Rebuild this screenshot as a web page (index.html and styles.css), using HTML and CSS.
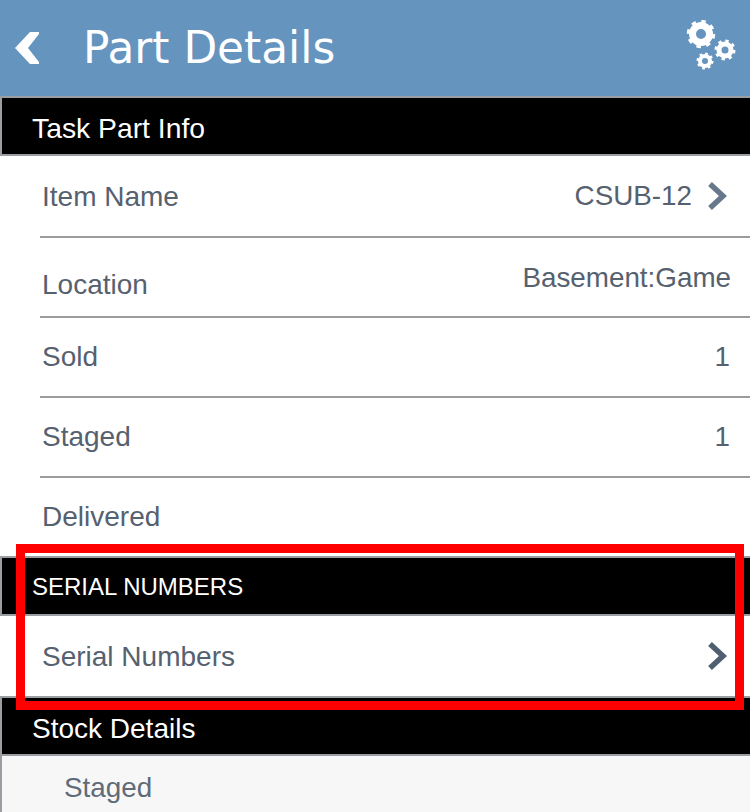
FILE: index.html
```html
<!DOCTYPE html>
<html lang="en">
<head>
    <meta charset="UTF-8">
    <meta name="viewport" content="width=device-width, initial-scale=1.0">
    <title>Part Details</title>
    <link rel="stylesheet" href="styles.css">
</head>
<body>
    <header class="topbar">
        <svg class="back-icon" width="25" height="32" viewBox="0 0 25 32">
            <path d="M24 2 L13 16 L24 30 L24 32 L15 32 L0 16 L15 0 L24 0 Z" fill="#fff"/>
        </svg>
        <h1>Part Details</h1>
        <svg class="gears-icon" width="52" height="54" viewBox="0 0 52 54">
            <g fill="none" stroke="#fff">
                <circle cx="17" cy="14" r="8.5" stroke-width="7"/>
                <circle cx="17" cy="14" r="12.5" stroke-width="3.5" stroke-dasharray="4.4 5.4"/>
                <circle cx="41" cy="30" r="6" stroke-width="5"/>
                <circle cx="41" cy="30" r="9" stroke-width="3" stroke-dasharray="3.3 3.77"/>
                <circle cx="21" cy="41" r="5" stroke-width="4"/>
                <circle cx="21" cy="41" r="7.2" stroke-width="2.6" stroke-dasharray="2.6 3.05"/>
            </g>
        </svg>
    </header>

    <main>
        <div class="section-title section-task">Task Part Info</div>
        <div class="row row-tall">
            <span>Item Name</span>
            <span class="row-value">CSUB-12
                <svg class="chevron" width="20" height="30" viewBox="0 0 20 30"><path d="M3 3 L16 15 L3 27" fill="none" stroke="#66788a" stroke-width="5.5"/></svg>
            </span>
        </div>
        <div class="row row-location">
            <span>Location</span>
            <span class="row-value">Basement:Game</span>
        </div>
        <div class="row">
            <span>Sold</span>
            <span class="row-value">1</span>
        </div>
        <div class="row">
            <span>Staged</span>
            <span class="row-value">1</span>
        </div>
        <div class="row row-last">
            <span>Delivered</span>
        </div>

        <div class="section-title section-caps">SERIAL NUMBERS</div>
        <div class="row row-last row-tall">
            <span>Serial Numbers</span>
            <span class="row-value">
                <svg class="chevron" width="20" height="30" viewBox="0 0 20 30"><path d="M3 3 L16 15 L3 27" fill="none" stroke="#4f5f70" stroke-width="5.5"/></svg>
            </span>
        </div>

        <div class="section-title section-stock">Stock Details</div>
        <div class="stock-row">Staged</div>
    </main>

    <div class="highlight"></div>
</body>
</html>
```

FILE: styles.css
```css
body {
    font-family: "Liberation Sans", Arial, sans-serif;
    margin: 0;
    padding: 0;
    height: 812px;
    overflow: hidden;
    position: relative;
    background-color: white;
}

.topbar {
    background-color: #6594bf;
    height: 96px;
    display: flex;
    align-items: center;
    padding: 0 15px;
}

.back-icon {
    margin-right: 43px;
    margin-top: -1px;
}

.topbar h1 {
    flex-grow: 1;
    margin: 0;
    color: white;
    font-family: "DejaVu Sans", Verdana, sans-serif;
    font-size: 43.8px;
    font-weight: normal;
    margin-top: -2px;
}

.gears-icon {
    margin-right: -1px;
    margin-top: -2px;
}

.section-title {
    background-color: black;
    color: white;
    height: 56px;
    line-height: 62px;
    font-size: 28px;
    padding-left: 30px;
    border: solid #9a9da1;
    border-width: 2px 0 2px 2px;
}

.section-task {
    font-size: 28.3px;
    line-height: 60px;
}

.section-caps {
    font-size: 24px;
    line-height: 57px;
}

.row {
    height: 78px;
    margin-left: 40px;
    padding: 0 20px 0 2px;
    border-bottom: 2px solid #9c9c9c;
    display: flex;
    justify-content: space-between;
    align-items: center;
    color: #56616f;
    font-size: 28px;
}

.row-value {
    display: flex;
    align-items: center;
    gap: 15px;
    font-size: 27.8px;
}

.chevron {
    margin-right: 3px;
}

.row-location span:first-child {
    padding-top: 15px;
}

.row-location .row-value {
    margin-top: 2px;
    margin-right: -1px;
}

.row-last {
    border-bottom: 0;
}

.row-tall {
    height: 80px;
}

.row-tall span:first-child {
    padding-top: 1px;
}

.stock-row {
    background-color: #f7f7f7;
    border-left: 2px solid #9a9da1;
    color: #5f6b79;
    font-size: 27.8px;
    padding: 16px 0 0 62px;
    height: 56px;
}

.highlight {
    position: absolute;
    left: 16px;
    top: 544px;
    width: 710px;
    height: 148px;
    border: 9px solid #fe0000;
}
```
